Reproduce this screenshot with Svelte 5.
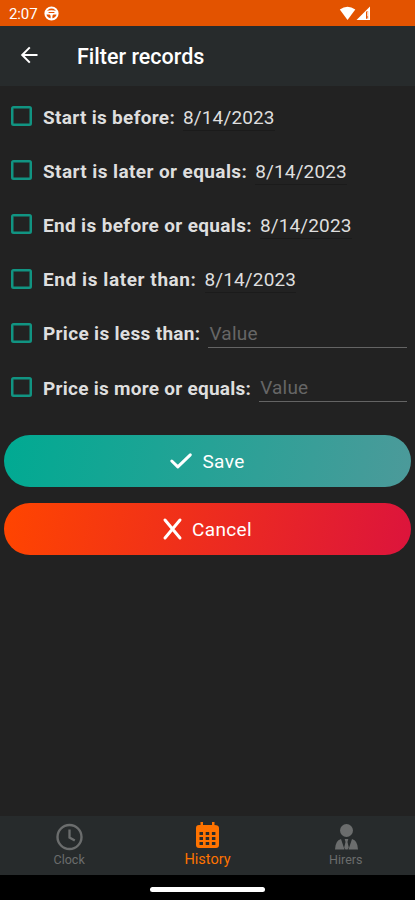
<script>
	let filters = $state([
		{ id: 'start-before', label: 'Start is before:', date: '8/14/2023', checked: false, spacing: 0.3 },
		{ id: 'start-later', label: 'Start is later or equals:', date: '8/14/2023', checked: false, spacing: 0.4 },
		{ id: 'end-before', label: 'End is before or equals:', date: '8/14/2023', checked: false, spacing: 0.34 },
		{ id: 'end-later', label: 'End is later than:', date: '8/14/2023', checked: false, spacing: 0.58 },
		{ id: 'price-less', label: 'Price is less than:', value: '', checked: false, spacing: 0.32 },
		{ id: 'price-more', label: 'Price is more or equals:', value: '', checked: false, spacing: 0.26 }
	]);

	let tab = $state('History');
	const tabs = ['Clock', 'History', 'Hirers'];

	function clear() {
		for (const f of filters) f.checked = false;
	}
</script>

<div class="screen">
	<div class="status">
		<span class="time">2:07</span>
		<svg width="15" height="15" viewBox="0 0 15 15">
			<circle cx="7.5" cy="7.5" r="6.1" fill="none" stroke="#fff" stroke-width="2" />
			<path d="M2 5.2Q7.5 3.4 13 5.2V8.6H9.4L8.4 9.8V13H6.6V9.8L5.6 8.6H2z" fill="#fff" />
			<path d="M4.6 6.5h5.8" stroke="#e65100" stroke-width="1" />
		</svg>
		<svg class="signal" width="33" height="16" viewBox="0 0 33 16">
			<path d="M.8 3.5Q8.5-2.2 16.3 3.5L8.5 14z" fill="#fff" />
			<path d="M31 .5V14H17.5z" fill="#fff" />
			<path d="M27 5.5h2.2v7.3H27z" fill="#e65100" />
			<path d="M28.8 6v4.5M28.8 11.5v1.3" stroke="#fff" stroke-width="1" />
		</svg>
	</div>

	<header>
		<button class="back" aria-label="Back">
			<svg width="18" height="18" viewBox="0 0 18 18" fill="none" stroke="#fff" stroke-width="2">
				<path d="M17.5 9H2.5M9.8 1.4L2.2 9l7.6 7.6" />
			</svg>
		</button>
		<h1>Filter records</h1>
	</header>

	<main>
		{#each filters as f (f.id)}
			<div class="row">
				<input id={f.id} type="checkbox" bind:checked={f.checked} />
				<label for={f.id} style="letter-spacing:{f.spacing}px">{f.label}</label>
				{#if f.date}
					<span class="date">{f.date}</span>
				{:else}
					<input class="value" type="text" placeholder="Value" bind:value={f.value} />
				{/if}
			</div>
		{/each}

		<div class="actions">
			<button class="save">
				<svg width="22" height="16" viewBox="0 0 22 16" fill="none" stroke="#fff" stroke-width="3">
					<path d="M1.8 8l6 5.8L20.3 1.8" stroke-linecap="round" stroke-linejoin="round" />
				</svg>
				<span>Save</span>
			</button>
			<button class="cancel" onclick={clear}>
				<svg width="19" height="22" viewBox="0 0 19 22" fill="none" stroke="#fff" stroke-width="3">
					<path d="M2 2l15 18M17 2L2 20" stroke-linecap="round" />
				</svg>
				<span>Cancel</span>
			</button>
		</div>
	</main>

	<nav>
		{#each tabs as name (name)}
			<button class="tab" class:active={tab === name} onclick={() => (tab = name)}>
				<svg width="28" height="28" viewBox="0 0 28 28">
					{#if name === 'Clock'}
						<circle cx="14.5" cy="14" r="12" fill="none" stroke="currentColor" stroke-width="2.4" />
						<path d="M14.5 6.5v8l5.3 3" fill="none" stroke="currentColor" stroke-width="2.3" />
					{:else if name === 'History'}
						<path
							fill="currentColor"
							fill-rule="evenodd"
							d="M7.5-1H10v3h9v-3h2.5v3q4.5 0 4.5 3v17q0 3-3 3H6q-3 0-3-3V5q0-3 3-3h1.5zM6.5 9v3H10V9zm6.2 0v3h3.5V9zm6.2 0v3h3.5V9zm-12.4 5v3H10v-3zm6.2 0v3h3.5v-3zm6.2 0v3h3.5v-3zm-12.4 5v3H10v-3zm6.2 0v3h3.5v-3zm6.2 0v3h3.5v-3z"
						/>
					{:else}
						<circle cx="14.5" cy="7.5" r="6.5" fill="currentColor" />
						<path
							fill="currentColor"
							d="M9 16q-5.8 1.5-6 10.5h9.5zM20 16q5.8 1.5 6 10.5h-9.5zM12.7 16h3.6l-.8 3 1.3 5.5-1.2 2h-2.2l-1.2-2 1.3-5.5z"
						/>
					{/if}
				</svg>
				<span>{name}</span>
			</button>
		{/each}
	</nav>
	<div class="gesture"><span></span></div>
</div>

<style>
	:global(body) {
		margin: 0;
		background: #222;
	}
	.screen {
		display: flex;
		flex-direction: column;
		width: 415px;
		height: 900px;
		overflow: hidden;
		background: #222;
		color: #dedede;
		font-family: Roboto, 'Liberation Sans', sans-serif;
	}
	button {
		padding: 0;
		border: 0;
		background: none;
		color: inherit;
		font: inherit;
	}
	svg {
		display: block;
		flex: none;
		overflow: visible;
	}
	.status {
		display: flex;
		align-items: center;
		box-sizing: border-box;
		height: 26px;
		padding: 1px 43px 0 9px;
		background: #e35300;
		color: #fff;
		font-size: 15px;
	}
	.time {
		width: 35px;
		letter-spacing: -0.1px;
	}
	.signal {
		margin-left: auto;
	}
	header {
		display: flex;
		align-items: center;
		box-sizing: border-box;
		height: 60px;
		padding: 0 20px 2px;
		background: #272b2c;
	}
	.back {
		width: 57px;
	}
	h1 {
		margin: 2px 0 0;
		color: #fff;
		font-size: 21.5px;
		font-weight: 500;
	}
	main {
		flex: 1;
		padding: 3px 4px 0;
	}
	.row {
		display: flex;
		align-items: center;
		height: 54.2px;
		padding: 0 4px 0 7px;
		font-size: 19px;
	}
	input[type='checkbox'] {
		flex: none;
		box-sizing: border-box;
		width: 21px;
		height: 20px;
		margin: 0 11px 0 0;
		appearance: none;
		border: 2px solid #119482;
		border-radius: 2.5px;
		box-shadow: inset 0 0 0 0.5px #119482;
	}
	input[type='checkbox']:checked {
		background: #119482;
	}
	label {
		margin: 2px 8px 0 0;
		font-weight: 700;
		white-space: nowrap;
	}
	.date {
		margin-top: 3px;
		padding: 1px 0;
		border-bottom: 1px solid #1b1b1b;
		letter-spacing: 0.12px;
	}
	.value {
		flex: 1;
		box-sizing: border-box;
		min-width: 0;
		height: 28px;
		margin-top: 2px;
		padding: 0 1px;
		border: 0;
		border-bottom: 1px solid #646464;
		outline: 0;
		background: none;
		color: inherit;
		font: inherit;
		letter-spacing: 0.2px;
	}
	.value::placeholder {
		color: #666;
		opacity: 1;
	}
	.actions {
		display: flex;
		flex-direction: column;
		gap: 16px;
		padding-top: 20.5px;
	}
	.actions button {
		display: flex;
		align-items: center;
		justify-content: center;
		gap: 10px;
		height: 52px;
		border-radius: 26px;
		color: #fff;
		font-size: 19px;
		letter-spacing: 0.4px;
	}
	.actions span {
		padding-top: 2px;
	}
	.actions .save {
		background: linear-gradient(100deg, #00aa92, #4c9a9a);
	}
	.actions .cancel {
		background: linear-gradient(100deg, #ff4500, #dc143c);
	}
	nav {
		display: flex;
		height: 59px;
		background: #272b2c;
	}
	.tab {
		display: flex;
		flex: 1;
		flex-direction: column;
		align-items: center;
		padding-top: 7px;
		color: #6b6d6d;
		font-size: 12.5px;
	}
	.tab span {
		line-height: 18px;
	}
	.active {
		color: #ff7300;
		font-size: 14.5px;
	}
	.gesture {
		display: flex;
		justify-content: center;
		height: 25px;
		background: #000;
	}
	.gesture span {
		width: 115px;
		height: 5px;
		margin-top: 12px;
		border-radius: 3px;
		background: #fff;
	}
</style>
